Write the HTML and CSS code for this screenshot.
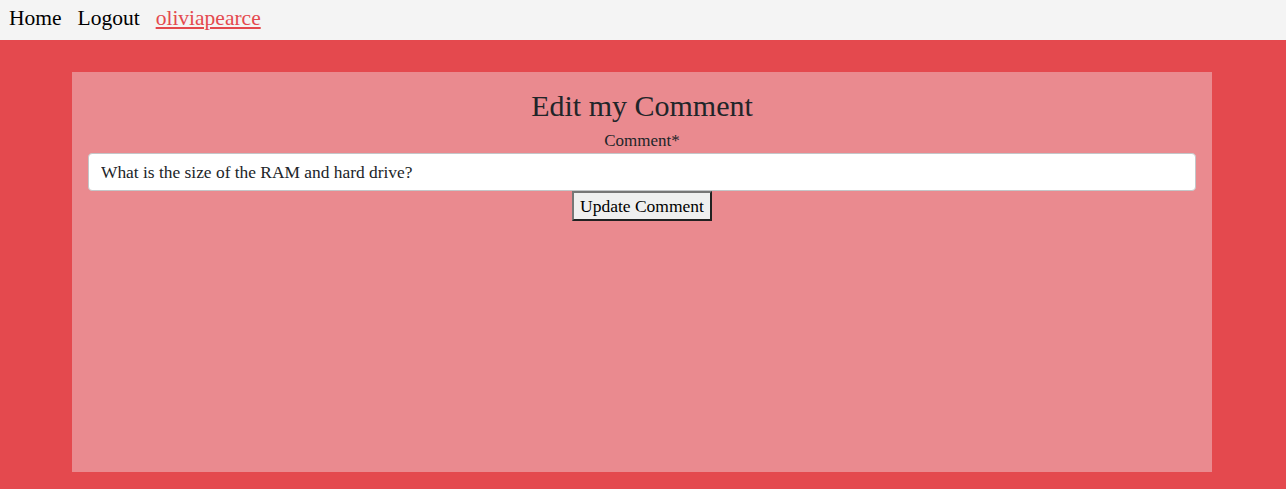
FILE: index.html
```html
<!DOCTYPE html>
<html lang="en">
<head>
<meta charset="utf-8">
<title>Edit my Comment</title>
<link rel="stylesheet" href="styles.css">
</head>
<body>
<nav class="topnav">
  <a class="nav-link" href="#">Home</a>
  <a class="nav-link" href="#">Logout</a>
  <a class="nav-user" href="#">oliviapearce</a>
</nav>
<main class="page">
  <section class="card">
    <h1 class="title">Edit my Comment</h1>
    <form class="form">
      <label class="label" for="comment">Comment*</label>
      <input class="input" id="comment" type="text" value="What is the size of the RAM and hard drive?">
      <button class="btn" type="button">Update Comment</button>
    </form>
  </section>
</main>
</body>
</html>
```
FILE: styles.css
```css
html, body {
  margin: 0;
  padding: 0;
}
body {
  font-family: "Liberation Serif", "DejaVu Serif", serif;
  color: #212529;
  background: #e4494e;
}
.topnav {
  height: 40px;
  background: #f4f4f4;
  display: flex;
  align-items: center;
  padding: 0 9px 3px;
  box-sizing: border-box;
  font-size: 21.5px;
}
.nav-link {
  color: #000;
  text-decoration: none;
  margin-right: 16px;
}
.nav-user {
  color: #e4494e;
  text-decoration: underline;
}
.page {
  padding: 32px 0 17px 72px;
}
.card {
  background: #ea8a8f;
  width: 1140px;
  height: 400px;
  box-sizing: border-box;
  padding: 16px 16px;
  text-align: center;
}
.title {
  margin: 0;
  font-weight: normal;
  font-size: 30px;
  line-height: 36px;
}
.form {
  display: flex;
  flex-direction: column;
  align-items: center;
}
.label {
  font-size: 17px;
  margin-top: 8px;
  line-height: 18px;
}
.input {
  align-self: stretch;
  box-sizing: border-box;
  height: 38px;
  margin-top: 3px;
  border: 1px solid #c4c6c8;
  border-radius: 4px;
  background: #fff;
  padding: 0 12px;
  font-family: inherit;
  font-size: 17.4px;
  color: #212529;
}
.btn {
  font-family: inherit;
  font-size: 17.5px;
  color: #000;
  background: #efefef;
  border: 2px outset #767676;
  padding: 2px 6px;
  height: 30px;
}
```
